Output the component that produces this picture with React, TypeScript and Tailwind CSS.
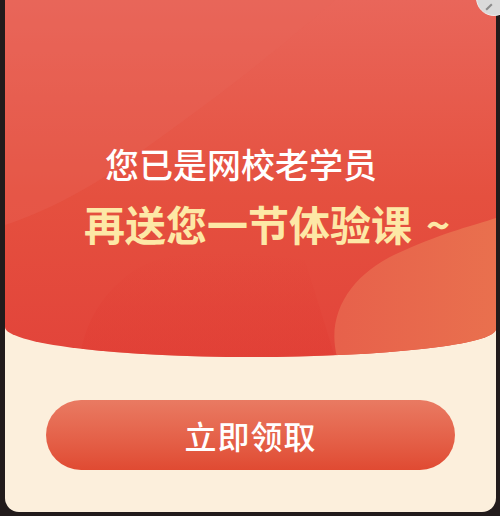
import React from "react";

const cjk = { fontFamily: '"Noto Sans CJK SC", "Noto Sans", sans-serif' };

function HeaderArt() {
  // decorative blobs in the red header
  return (
    <svg
      className="absolute inset-0 w-full h-full"
      viewBox="0 0 491 357"
      preserveAspectRatio="none"
    >
      <defs>
        <linearGradient id="base" x1="0" y1="0" x2="0" y2="1">
          <stop offset="0" stopColor="#e9665a" />
          <stop offset="0.55" stopColor="#e5503f" />
          <stop offset="1" stopColor="#e2443a" />
        </linearGradient>
        <linearGradient id="right" x1="0" y1="0" x2="1" y2="0">
          <stop offset="0" stopColor="#e7614b" />
          <stop offset="1" stopColor="#e9704e" />
        </linearGradient>
        <linearGradient id="mid" x1="0" y1="0" x2="0" y2="1">
          <stop offset="0" stopColor="#e13d33" stopOpacity="0" />
          <stop offset="1" stopColor="#e13d33" stopOpacity="0.5" />
        </linearGradient>
      </defs>
      <rect width="491" height="357" fill="url(#base)" />
      <path
        d="M0 0 L0 225 C40 212 80 190 110 170 C180 120 250 70 330 0 Z"
        fill="#e9685a"
        opacity="0.3"
      />
      <path
        d="M75 357 C80 320 100 290 130 270 C170 245 230 250 300 260 L330 357 Z"
        fill="url(#mid)"
      />
      <path
        d="M332 357 C320 310 350 270 400 250 C440 232 470 225 491 218 L491 357 Z"
        fill="url(#right)"
      />
    </svg>
  );
}

export default function App() {
  return (
    <div
      className="w-[500px] h-[516px] bg-[#221b1b] pl-[5px] pr-[4px] overflow-hidden relative"
      style={cjk}
    >
      <div className="w-[491px] h-[512px] bg-[#fcefdc] rounded-b-[14px] overflow-hidden flex flex-col">
        <div className="relative h-[357px] rounded-bl-[50%_30px] rounded-br-[50%_28px] overflow-hidden">
          <HeaderArt />
          <div className="relative flex flex-col pt-[143px]">
            <p className="pl-[100px] text-[34px] leading-[42px] font-medium text-white">
              您已是网校老学员
            </p>
            <p className="pl-[79px] mt-[15px] text-[41px] leading-[47px] font-bold text-[#fde8a6]">
              再送您一节体验课<span className="ml-[14px]">~</span>
            </p>
          </div>
        </div>
        <button className="mx-[41px] mt-[43px] h-[70px] rounded-full bg-gradient-to-b from-[#e97a62] to-[#e04a32] text-white text-[32px] font-medium tracking-[1px] flex items-center justify-center">
          立即领取
        </button>
      </div>
      <div className="absolute -top-[20px] -right-[12px] w-[36px] h-[36px] rounded-full bg-[#dadada] border border-[#eeeeee] flex items-center justify-center">
        <div className="w-[2px] h-[8px] bg-[#8a8a8a] rotate-45 mt-[18px] mr-[10px]" />
      </div>
    </div>
  );
}
